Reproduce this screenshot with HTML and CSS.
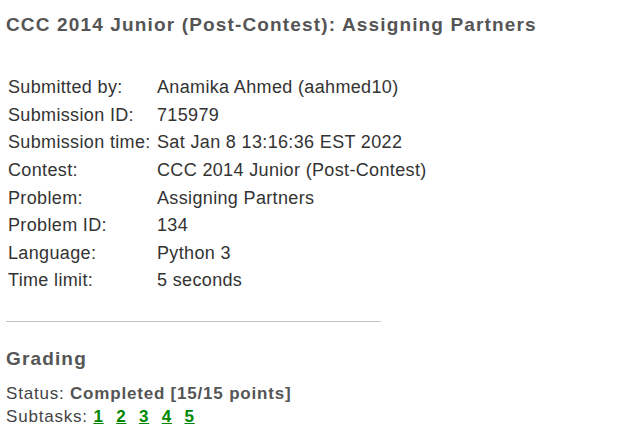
FILE: index.html
```html
<!DOCTYPE html>
<html>
<head>
<meta charset="utf-8">
<link rel="stylesheet" href="styles.css">
</head>
<body>
<div class="page">
  <h2 class="title">CCC 2014 Junior (Post-Contest): Assigning Partners</h2>
  <table class="info">
    <tr><td class="k">Submitted by:</td><td>Anamika Ahmed (aahmed10)</td></tr>
    <tr><td class="k">Submission ID:</td><td>715979</td></tr>
    <tr><td class="k">Submission time:</td><td>Sat Jan 8 13:16:36 EST 2022</td></tr>
    <tr><td class="k">Contest:</td><td>CCC 2014 Junior (Post-Contest)</td></tr>
    <tr><td class="k">Problem:</td><td>Assigning Partners</td></tr>
    <tr><td class="k">Problem ID:</td><td>134</td></tr>
    <tr><td class="k">Language:</td><td>Python 3</td></tr>
    <tr><td class="k">Time limit:</td><td>5 seconds</td></tr>
  </table>
  <hr class="sep">
  <h3 class="grading">Grading</h3>
  <div class="line first">Status: <b>Completed [15/15 points]</b></div>
  <div class="line">Subtasks: <a href="#" class="sub">1</a><a href="#" class="sub">2</a><a href="#" class="sub">3</a><a href="#" class="sub">4</a><a href="#" class="sub">5</a></div>
</div>
</body>
</html>
```
FILE: styles.css
```css
html, body {
  margin: 0;
  padding: 0;
  background: #fff;
}
body {
  font-family: "Liberation Sans", Arial, sans-serif;
  color: #555;
}
.page {
  padding: 0 6px;
}
.title {
  margin: 14px 0 0;
  font-size: 19px;
  line-height: 22px;
  font-weight: bold;
  color: #555;
  letter-spacing: 1.15px;
}
.info {
  margin-top: 38px;
  border-collapse: collapse;
  font-size: 18px;
  color: #333;
}
.info td {
  padding: 0 0 0 2px;
  height: 27.6px;
  line-height: 21px;
  white-space: nowrap;
  letter-spacing: 0.35px;
}
.info td.k {
  width: 147px;
}
.sep {
  width: 375px;
  margin: 26px 0 0;
  border: 0;
  border-top: 1px solid #c4c4c4;
  height: 0;
}
.grading {
  margin: 26px 0 0;
  font-size: 19px;
  line-height: 22px;
  font-weight: bold;
  color: #555;
  letter-spacing: 1.15px;
}
.line {
  font-size: 17px;
  line-height: 23px;
  color: #444;
  letter-spacing: 0.8px;
}
.line.first {
  margin-top: 12px;
}
.line b {
  color: #555;
  letter-spacing: 0.8px;
}
.sub {
  color: #080;
  font-weight: bold;
  text-decoration: underline;
  margin-right: 12.5px;
}
```
